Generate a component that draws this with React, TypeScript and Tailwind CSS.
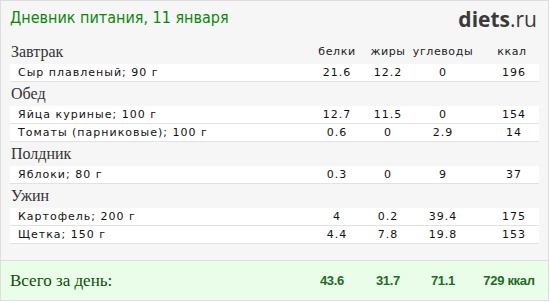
import React from "react";

type Item = { name: string; p: string; f: string; c: string; k: string };
type Meal = { title: string; items: Item[] };

const meals: Meal[] = [
  {
    title: "Завтрак",
    items: [{ name: "Сыр плавленый; 90 г", p: "21.6", f: "12.2", c: "0", k: "196" }],
  },
  {
    title: "Обед",
    items: [
      { name: "Яйца куриные; 100 г", p: "12.7", f: "11.5", c: "0", k: "154" },
      { name: "Томаты (парниковые); 100 г", p: "0.6", f: "0", c: "2.9", k: "14" },
    ],
  },
  {
    title: "Полдник",
    items: [{ name: "Яблоки; 80 г", p: "0.3", f: "0", c: "9", k: "37" }],
  },
  {
    title: "Ужин",
    items: [
      { name: "Картофель; 200 г", p: "4", f: "0.2", c: "39.4", k: "175" },
      { name: "Щетка; 150 г", p: "4.4", f: "7.8", c: "19.8", k: "153" },
    ],
  },
];

const cols = "grid grid-cols-[1fr_56px_46px_64px_64px] items-center";

const App: React.FC = () => {
  return (
    <div className="w-[549px] h-[301px] bg-[#f6f6f6] border border-[#dedede] overflow-hidden">
      {/* Header */}
      <div className="h-[38px] flex justify-between items-start px-[9px] pt-[6px]">
        <h1 className="font-['DejaVu_Sans',sans-serif] [font-stretch:condensed] text-[16px] leading-[22px] text-[#0b860b] m-0 font-normal">
          Дневник питания, 11 января
        </h1>
        <div className="font-['Open_Sans',sans-serif] text-[21px] leading-[24px] text-[#3a3a3a] pr-[2px]">
          <span className="font-bold">diets</span>
          <span>.ru</span>
        </div>
      </div>

      {/* Meals */}
      <div className="px-[9px]">
        {meals.map((meal, i) => (
          <div key={meal.title}>
            <div className={`${cols} ${i === 0 ? "h-[25px]" : "h-[24px]"}`}>
              <span className="font-['Liberation_Serif',serif] text-[16px] leading-[18px] text-[#333] self-end pb-[3px] pl-[1px]">
                {meal.title}
              </span>
              {i === 0 && (
                <>
                  <span className="text-center font-['DejaVu_Sans',sans-serif] text-[11px] tracking-[0.6px] text-[#222] self-end pb-[4px]">
                    белки
                  </span>
                  <span className="text-center font-['DejaVu_Sans',sans-serif] text-[11px] tracking-[0.6px] text-[#222] self-end pb-[4px]">
                    жиры
                  </span>
                  <span className="text-center font-['DejaVu_Sans',sans-serif] text-[11px] tracking-[0.6px] text-[#222] self-end pb-[4px]">
                    углеводы
                  </span>
                  <span className="text-center pl-[10px] font-['DejaVu_Sans',sans-serif] text-[11px] tracking-[0.6px] text-[#222] self-end pb-[4px]">
                    ккал
                  </span>
                </>
              )}
            </div>
            {meal.items.map((it) => (
              <div
                key={it.name}
                className={`${cols} h-[18px] bg-white border-b border-[#e2e2e2] font-['DejaVu_Sans',sans-serif] text-[11px] tracking-[1px] leading-[17px] text-[#111]`}
              >
                <span className="pl-[8px]">{it.name}</span>
                <span className="text-center">{it.p}</span>
                <span className="text-center">{it.f}</span>
                <span className="text-center">{it.c}</span>
                <span className="text-center pl-[14px]">{it.k}</span>
              </div>
            ))}
          </div>
        ))}
      </div>

      {/* Total */}
      <div className={`${cols} mt-[16px] h-[41px] bg-[#eafde9] border-y border-[#dcdcdc] px-[9px]`}>
        <span className="font-['Liberation_Serif',serif] text-[17px] text-[#0a4d0a]">
          Всего за день:
        </span>
        <span className="text-center font-['Liberation_Sans',sans-serif] font-bold text-[13px] text-[#1f6b1f] tracking-[-0.3px] pr-[10px]">
          43.6
        </span>
        <span className="text-center font-['Liberation_Sans',sans-serif] font-bold text-[13px] text-[#1f6b1f] tracking-[-0.3px]">
          31.7
        </span>
        <span className="text-center font-['Liberation_Sans',sans-serif] font-bold text-[13px] text-[#1f6b1f] tracking-[-0.3px]">
          71.1
        </span>
        <span className="text-center pl-[4px] font-['Liberation_Sans',sans-serif] font-bold text-[13px] text-[#1f6b1f] tracking-[-0.3px] whitespace-nowrap">
          729 ккал
        </span>
      </div>
    </div>
  );
};

export default App;
